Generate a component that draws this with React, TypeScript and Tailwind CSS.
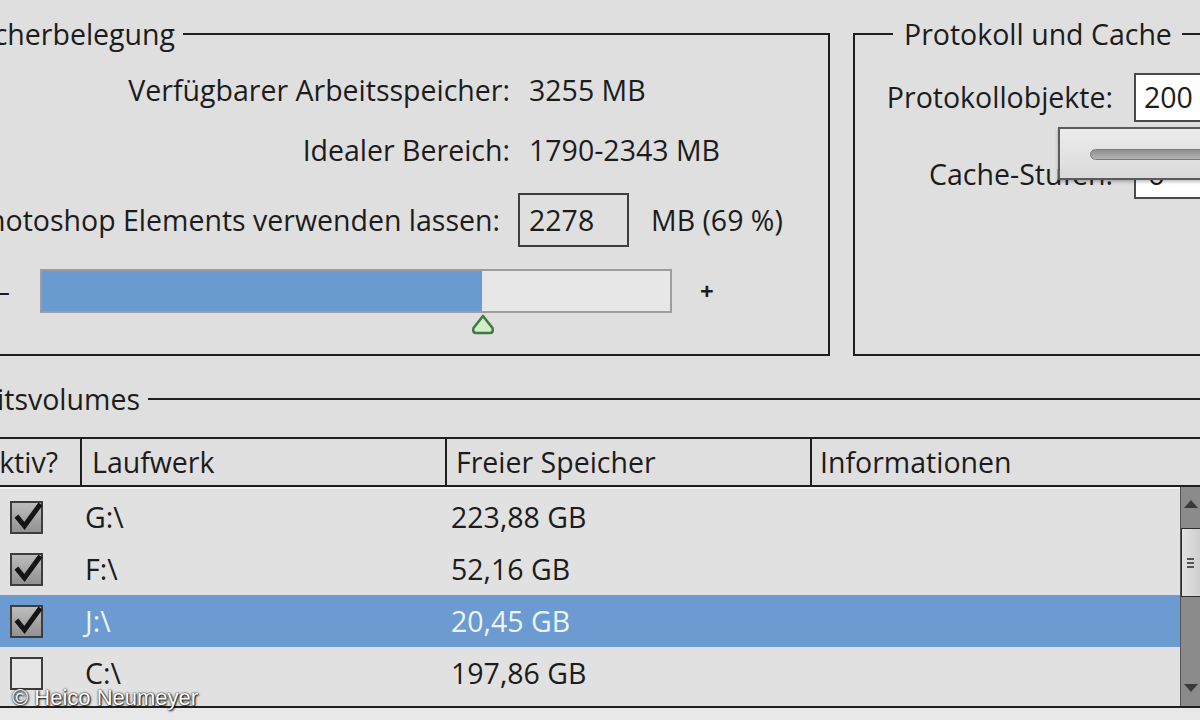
import React from "react";

const LINE = "border-[#1f1f1f]";

function Check({ checked }: { checked: boolean }) {
  return (
    <div
      className={
        "relative w-[33px] h-[33px] border-2 border-[#3d3d3d] " +
        (checked ? "bg-gradient-to-b from-[#bdbdbd] to-[#929292]" : "bg-[#e6e6e6]")
      }
    >
      {checked && (
        <svg className="absolute left-0 top-0" width="33" height="33" viewBox="0 0 33 33">
          <path d="M6 15 L12.5 23 L27 3" fill="none" stroke="#141414" strokeWidth="5" strokeLinecap="square" />
        </svg>
      )}
    </div>
  );
}

const rows = [
  { d: "G:\\", v: "223,88 GB", c: true, s: false },
  { d: "F:\\", v: "52,16 GB", c: true, s: false },
  { d: "J:\\", v: "20,45 GB", c: true, s: true },
  { d: "C:\\", v: "197,86 GB", c: false, s: false },
];

export default function App() {
  return (
    <div className="relative w-[1200px] h-[720px] overflow-hidden bg-[#dfdfdf] font-['Open_Sans',sans-serif] text-[28.5px] leading-none text-[#1c1c1c]">
      {/* top section */}
      <div className="flex pt-[20px] -ml-[40px] gap-[23px]">
        {/* left group */}
        <div className="w-[870px] shrink-0 flex flex-col">
          <div className="flex h-[28px]">
            <div className="w-[223px] shrink-0 flex justify-end items-center pr-[8px] whitespace-nowrap">
              Arbeitsspeicherbelegung
            </div>
            <div className={"flex-1 self-end h-[15px] border-t-2 border-r-2 " + LINE} />
          </div>
          <div className={"h-[308px] border-l-2 border-r-2 border-b-2 flex flex-col " + LINE}>
            <div className="flex items-center h-[34px] mt-[25px] whitespace-nowrap">
              <div className="w-[548px] shrink-0 flex justify-end">Verfügbarer Arbeitsspeicher:</div>
              <div className="ml-[19px]">3255 MB</div>
            </div>
            <div className="flex items-center h-[34px] mt-[26px] whitespace-nowrap">
              <div className="w-[548px] shrink-0 flex justify-end">Idealer Bereich:</div>
              <div className="ml-[19px]">1790-2343 MB</div>
            </div>
            <div className="flex items-center h-[54px] mt-[26px] whitespace-nowrap">
              <div className="w-[538px] shrink-0 flex justify-end">Von Photoshop Elements verwenden lassen:</div>
              <div className="ml-[18px] w-[111px] h-[54px] border-2 border-[#3e3e3e] flex items-center pl-[9px]">
                2278
              </div>
              <div className="ml-[22px]">MB (69 %)</div>
            </div>
            <div className="flex items-center h-[44px] mt-[22px]">
              <div className="w-[78px] shrink-0 flex justify-end pr-[30px]">–</div>
              <div className="relative w-[632px] h-[44px] border-2 border-[#9d9d9d] bg-[#e7e7e7]">
                <div className="w-[440px] h-full bg-[#6a9bd0]" />
                <svg className="absolute left-[428px] top-[43px]" width="26" height="22" viewBox="0 0 26 22">
                  <path
                    d="M13 2 L22.5 14 Q24 19 19.5 19 L6.5 19 Q2 19 3.5 14 Z"
                    fill="#d2eecb"
                    stroke="#3f7a3f"
                    strokeWidth="2.6"
                    strokeLinejoin="round"
                  />
                </svg>
              </div>
              <div className="ml-[28px] text-[24px] font-bold">+</div>
            </div>
          </div>
        </div>
        {/* right group */}
        <div className="w-[400px] shrink-0 flex flex-col">
          <div className="flex h-[28px]">
            <div className={"w-[40px] self-end h-[15px] border-t-2 border-l-2 " + LINE} />
            <div className="pl-[11px] pr-[10px] flex items-center whitespace-nowrap">Protokoll und Cache</div>
            <div className={"flex-1 self-end h-[15px] border-t-2 border-r-2 " + LINE} />
          </div>
          <div className={"relative h-[308px] border-l-2 border-r-2 border-b-2 flex flex-col " + LINE}>
            <div className="flex items-center h-[49px] mt-[25px] whitespace-nowrap">
              <div className="w-[258px] shrink-0 flex justify-end">Protokollobjekte:</div>
              <div className="ml-[21px] w-[120px] h-[49px] bg-white border-2 border-[#4a4a4a] flex items-center pl-[8px]">
                200
              </div>
            </div>
            <div className="flex items-center h-[49px] mt-[28px] whitespace-nowrap">
              <div className="w-[258px] shrink-0 flex justify-end">Cache-Stufen:</div>
              <div className="ml-[21px] w-[120px] h-[49px] bg-white border-2 border-[#4a4a4a] flex items-center pl-[12px]">
                6
              </div>
            </div>
            {/* slider popup */}
            <div className="absolute left-[203px] top-[79px] w-[200px] h-[53px] border-2 border-[#5b5b5b] bg-gradient-to-b from-[#ececec] to-[#dadada] shadow-[0_2px_3px_rgba(0,0,0,0.25)]">
              <div className="ml-[30px] mt-[20px] h-[11px] rounded-l-full border border-[#7c7c7c] bg-gradient-to-b from-[#8f8f8f] to-[#b4b4b4]" />
            </div>
          </div>
        </div>
      </div>

      {/* Arbeitsvolumes */}
      <div className="-ml-[40px] w-[1240px] flex flex-col mt-[29px]">
        <div className="flex h-[28px]">
          <div className="w-[188px] shrink-0 flex justify-end items-center pr-[8px] whitespace-nowrap">
            Arbeitsvolumes
          </div>
          <div className={"flex-1 self-end h-[15px] border-t-2 " + LINE} />
        </div>
        <div className={"mt-[24px] flex h-[50px] border-t-2 border-b-2 items-stretch " + LINE}>
          <div className={"w-[122px] shrink-0 border-r-2 flex items-center justify-end pr-[22px] " + LINE}>Aktiv?</div>
          <div className={"w-[365px] shrink-0 border-r-2 flex items-center pl-[10px] " + LINE}>Laufwerk</div>
          <div className={"w-[365px] shrink-0 border-r-2 flex items-center pl-[9px] " + LINE}>Freier Speicher</div>
          <div className="flex-1 flex items-center pl-[8px]">Informationen</div>
        </div>
        <div className={"flex h-[221px] border-b-2 bg-[#e1e1e1] " + LINE}>
          <div className="flex-1 flex flex-col pt-[2px] border-t-2 border-[#f4f4f4] overflow-hidden">
            {rows.map((r) => (
              <div
                key={r.d}
                className={"flex h-[52px] shrink-0 items-center " + (r.s ? "bg-[#6b9bd0] text-[#eef4fb]" : "")}
              >
                <div className="w-[122px] shrink-0 pl-[50px]">
                  <Check checked={r.c} />
                </div>
                <div className="w-[365px] shrink-0 pl-[3px]">{r.d}</div>
                <div className="w-[365px] shrink-0 pl-[4px]">{r.v}</div>
              </div>
            ))}
          </div>
          <div className="w-[20px] shrink-0 bg-[#8b8b8b] flex flex-col items-center border-l border-[#555]">
            <svg className="mt-[13px]" width="14" height="8" viewBox="0 0 14 8">
              <path d="M7 0 L14 8 L0 8 Z" fill="#3a3a3a" />
            </svg>
            <div className="mt-[20px] w-[20px] h-[69px] bg-gradient-to-r from-[#e2e2e2] to-[#cfcfcf] border border-[#2e2e2e] flex flex-col items-center justify-center gap-[2px]">
              <div className="w-[7px] h-[2px] bg-[#555]" />
              <div className="w-[7px] h-[2px] bg-[#555]" />
              <div className="w-[7px] h-[2px] bg-[#555]" />
            </div>
            <div className="flex-1" />
            <svg className="mb-[14px]" width="14" height="8" viewBox="0 0 14 8">
              <path d="M0 0 L14 0 L7 8 Z" fill="#3a3a3a" />
            </svg>
          </div>
        </div>
        <div className="h-[20px] bg-[#e8e8e8]" />
      </div>

      <div className="absolute left-[12px] top-[687px] font-['Liberation_Sans',Arial,sans-serif] text-[22px] leading-none text-white [text-shadow:1px_1px_2px_#000,0_0_2px_#000]">
        © Heico Neumeyer
      </div>
    </div>
  );
}
